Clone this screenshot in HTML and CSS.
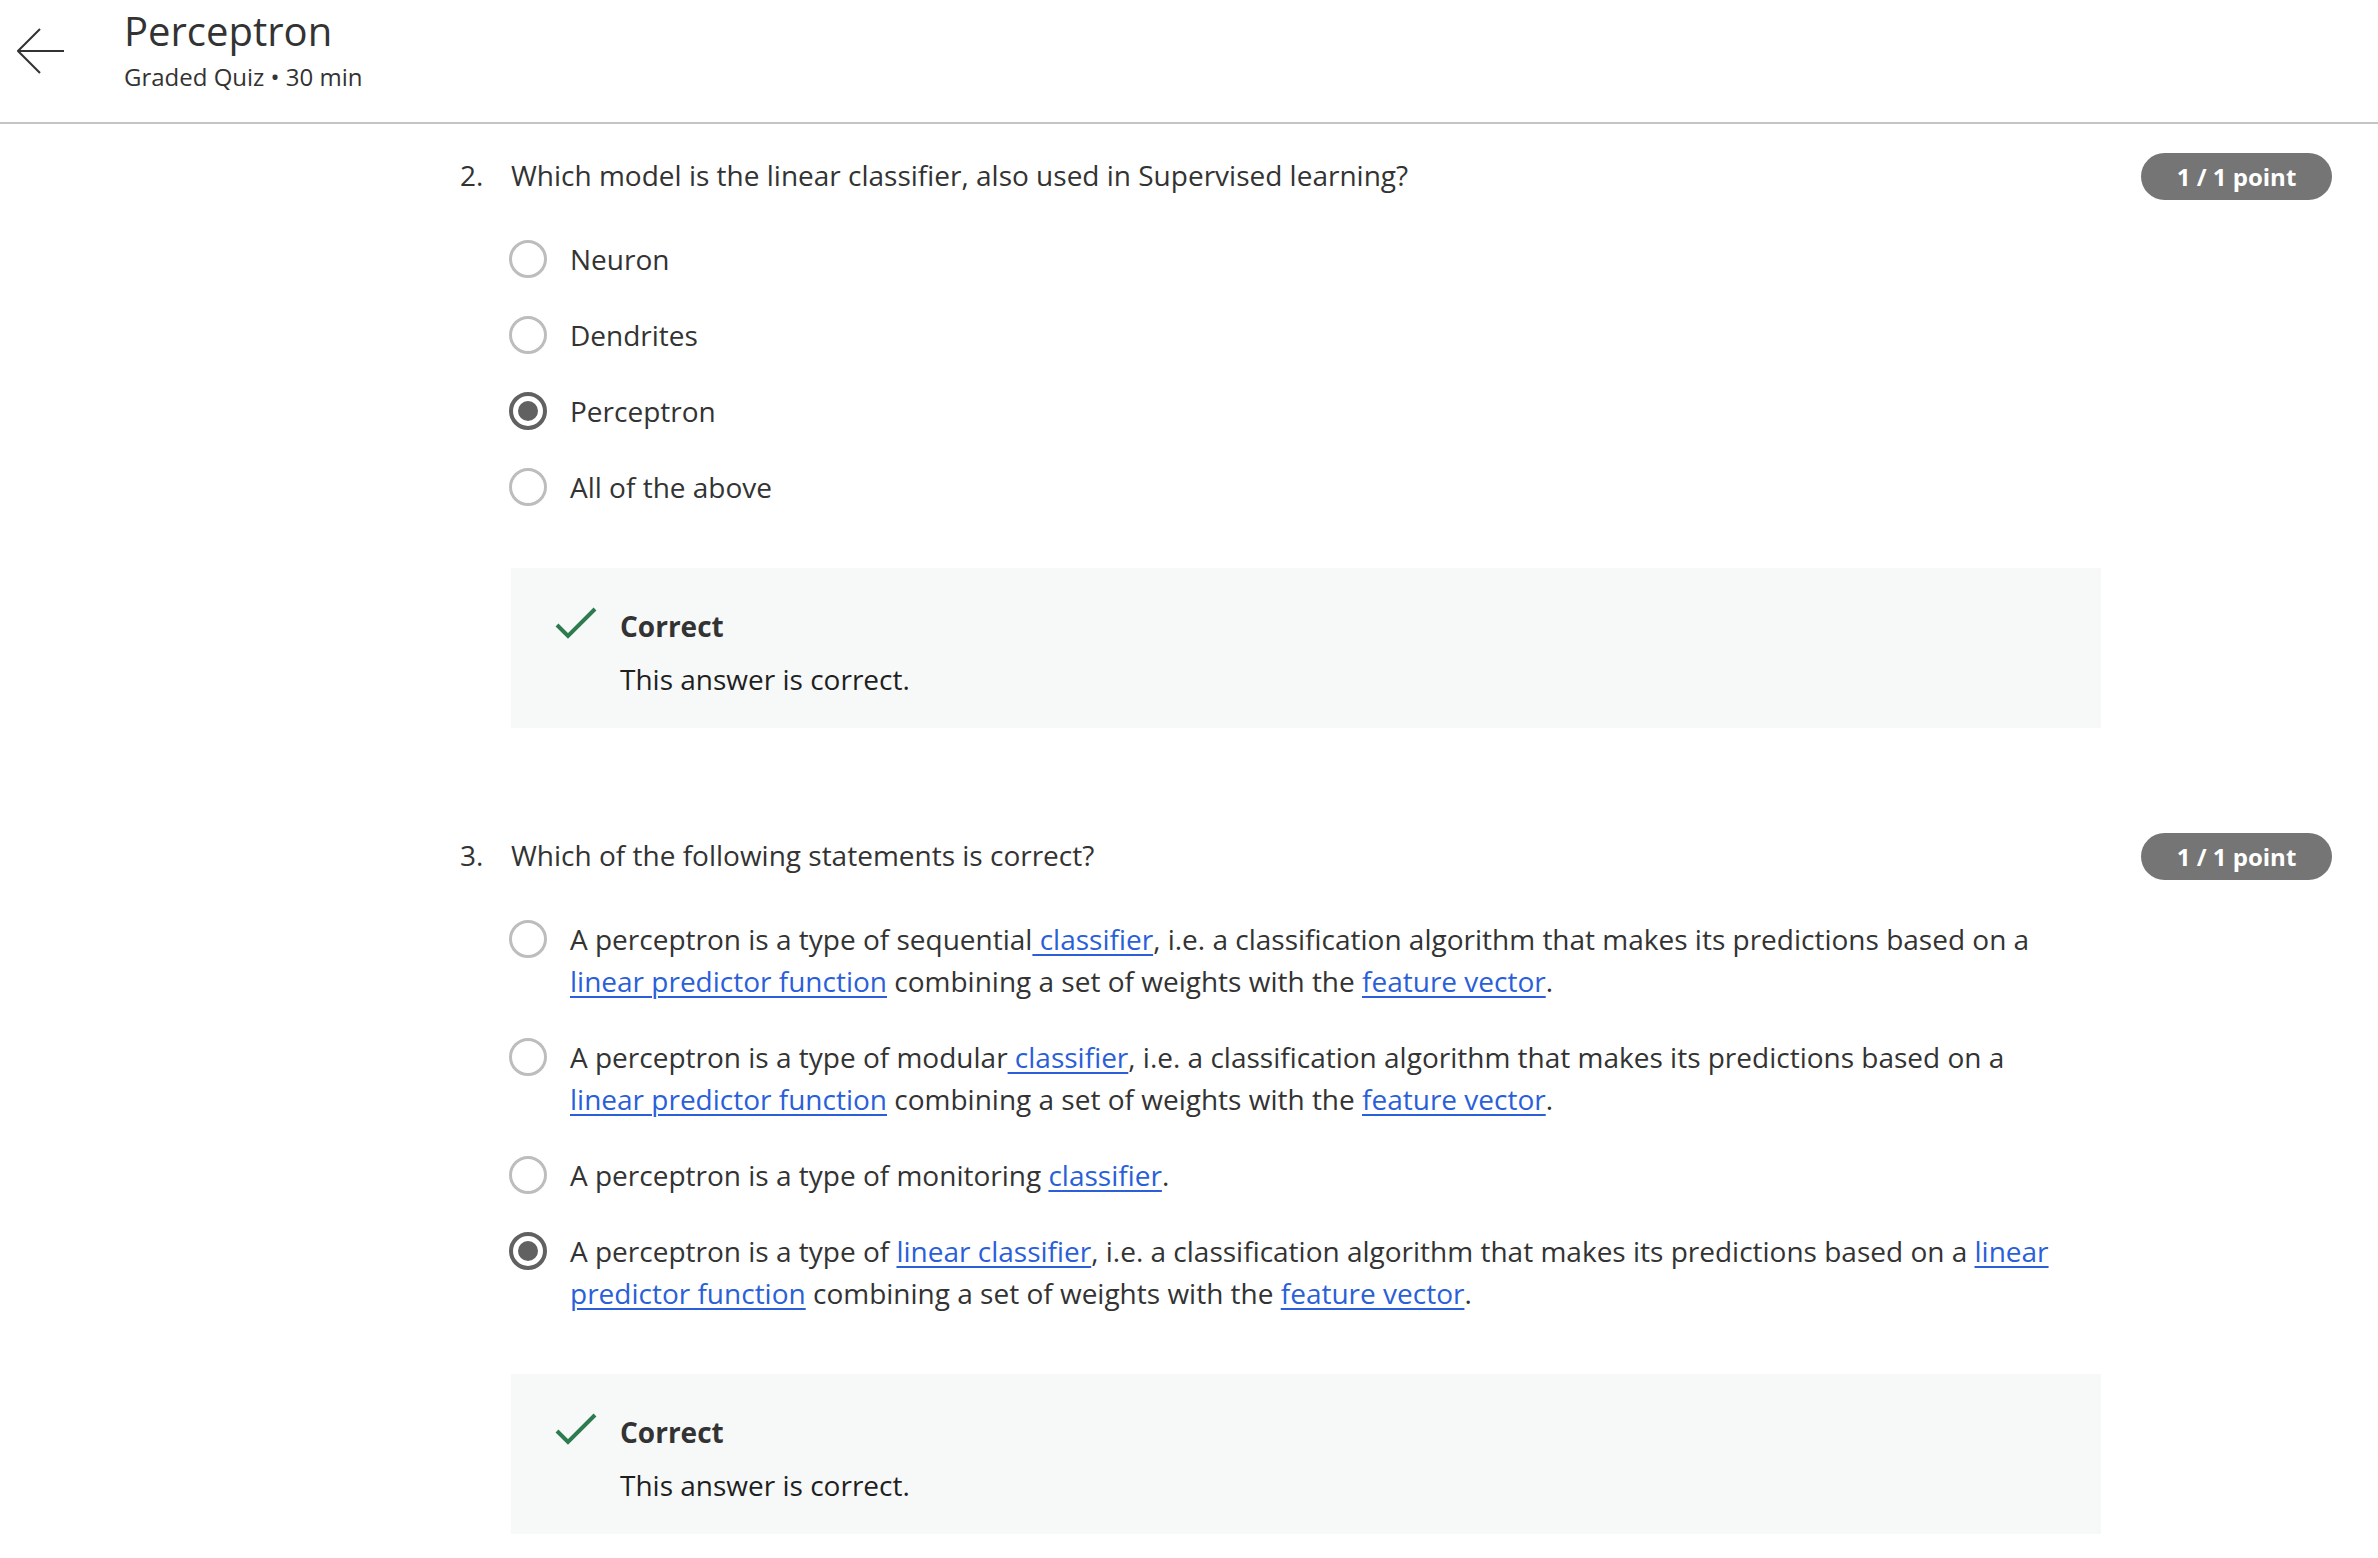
FILE: index.html
```html
<!DOCTYPE html>
<html lang="en">
<head>
<meta charset="utf-8">
<title>Perceptron</title>
<link rel="stylesheet" href="styles.css">
</head>
<body>
<header class="topbar">
  <button class="back" aria-label="Back">
    <svg width="48" height="48" viewBox="0 0 48 48" fill="none" stroke="#333" stroke-width="2">
      <path d="M1 23H47"/>
      <path d="M23 1L1 23L23 45"/>
    </svg>
  </button>
  <div class="titles">
    <h1 class="title">Perceptron</h1>
    <div class="subtitle">Graded Quiz • 30 min</div>
  </div>
</header>

<main class="quiz">
  <section class="question">
    <div class="qnum">2.</div>
    <div class="qbody">
      <div class="qtext">Which model is the linear classifier, also used in Supervised learning?</div>
      <div class="options">
        <div class="option"><span class="radio"></span><span class="otext">Neuron</span></div>
        <div class="option"><span class="radio"></span><span class="otext">Dendrites</span></div>
        <div class="option"><span class="radio checked"></span><span class="otext">Perceptron</span></div>
        <div class="option"><span class="radio"></span><span class="otext">All of the above</span></div>
      </div>
      <div class="feedback">
        <svg class="check" width="44" height="36" viewBox="0 0 44 36" fill="none" stroke="#2e7b50" stroke-width="4">
          <path d="M2 18L13 29L40 2"/>
        </svg>
        <div class="fbtext">
          <div class="fbtitle">Correct</div>
          <div class="fbdesc">This answer is correct.</div>
        </div>
      </div>
    </div>
    <div class="badge">1 / 1 point</div>
  </section>

  <section class="question">
    <div class="qnum">3.</div>
    <div class="qbody">
      <div class="qtext">Which of the following statements is correct?</div>
      <div class="options">
        <div class="option"><span class="radio"></span><span class="otext">A perceptron is a type of sequential<a href="#"> classifier</a>, i.e. a classification algorithm that makes its predictions based on a <a href="#">linear predictor function</a> combining a set of weights with the <a href="#">feature vector</a>.</span></div>
        <div class="option"><span class="radio"></span><span class="otext">A perceptron is a type of modular<a href="#"> classifier</a>, i.e. a classification algorithm that makes its predictions based on a <a href="#">linear predictor function</a> combining a set of weights with the <a href="#">feature vector</a>.</span></div>
        <div class="option"><span class="radio"></span><span class="otext">A perceptron is a type of monitoring <a href="#">classifier</a>.</span></div>
        <div class="option"><span class="radio checked"></span><span class="otext">A perceptron is a type of <a href="#">linear classifier</a>, i.e. a classification algorithm that makes its predictions based on a <a href="#">linear predictor function</a> combining a set of weights with the <a href="#">feature vector</a>.</span></div>
      </div>
      <div class="feedback">
        <svg class="check" width="44" height="36" viewBox="0 0 44 36" fill="none" stroke="#2e7b50" stroke-width="4">
          <path d="M2 18L13 29L40 2"/>
        </svg>
        <div class="fbtext">
          <div class="fbtitle">Correct</div>
          <div class="fbdesc">This answer is correct.</div>
        </div>
      </div>
    </div>
    <div class="badge">1 / 1 point</div>
  </section>
</main>
</body>
</html>
```

FILE: styles.css
```css
* {
  box-sizing: border-box;
}

html, body {
  margin: 0;
  padding: 0;
  background: #ffffff;
}

body {
  font-family: "Open Sans", "Liberation Sans", sans-serif;
  color: #333333;
  overflow: hidden;
  height: 1558px;
}

.topbar {
  display: flex;
  align-items: flex-start;
  height: 124px;
  border-bottom: 2px solid #c4c4c4;
}

.back {
  border: 0;
  background: none;
  padding: 0;
  margin: 28px 0 0 17px;
  width: 48px;
  height: 48px;
  cursor: pointer;
}

.back svg {
  display: block;
}

.titles {
  margin-left: 59px;
  padding-top: 7px;
}

.title {
  margin: 0;
  font-size: 40px;
  line-height: 48px;
  font-weight: 400;
  color: #333333;
}

.subtitle {
  margin-top: 6px;
  font-size: 24px;
  line-height: 32px;
  color: #333333;
}

.quiz {
  padding-left: 460px;
}

.question {
  display: flex;
  align-items: flex-start;
}

.question + .question {
  margin-top: 106px;
}

.question:first-child {
  margin-top: 30px;
}

.qnum {
  width: 51px;
  flex: none;
  font-size: 28px;
  line-height: 42px;
}

.qbody {
  width: 1590px;
  flex: none;
}

.qtext {
  font-size: 28px;
  line-height: 42px;
}

.options {
  display: flex;
  flex-direction: column;
  gap: 34px;
  margin-top: 42px;
}

.option {
  display: flex;
  align-items: flex-start;
}

.radio {
  flex: none;
  width: 38px;
  height: 38px;
  margin-top: 2px;
  margin-left: -2px;
  margin-right: 1px;
  border: 3px solid #bdbdbd;
  border-radius: 50%;
  position: relative;
}

.radio.checked {
  border: 4px solid #616161;
}

.radio.checked::after {
  content: "";
  position: absolute;
  left: 5px;
  top: 5px;
  width: 20px;
  height: 20px;
  border-radius: 50%;
  background: #616161;
}

.otext {
  margin-left: 22px;
  max-width: 1500px;
  font-size: 28px;
  line-height: 42px;
}

.otext a {
  color: #2a5fd9;
  text-decoration: underline;
  text-underline-offset: 4px;
  text-decoration-thickness: 2px;
}

.feedback {
  margin-top: 60px;
  background: #f7f9f9;
  display: flex;
  align-items: flex-start;
  padding: 37px 0 28px 44px;
}

.check {
  flex: none;
  margin-top: 2px;
}

.fbtext {
  margin-left: 21px;
}

.fbtitle {
  font-size: 28px;
  line-height: 42px;
  font-weight: 700;
  color: #333333;
}

.fbdesc {
  margin-top: 11px;
  font-size: 28px;
  line-height: 42px;
  color: #1f1f1f;
}

.badge {
  flex: none;
  margin-left: 40px;
  margin-top: -1px;
  width: 191px;
  height: 47px;
  border-radius: 24px;
  background: #757575;
  color: #ffffff;
  font-weight: 700;
  font-size: 24px;
  line-height: 47px;
  text-align: center;
}
```
